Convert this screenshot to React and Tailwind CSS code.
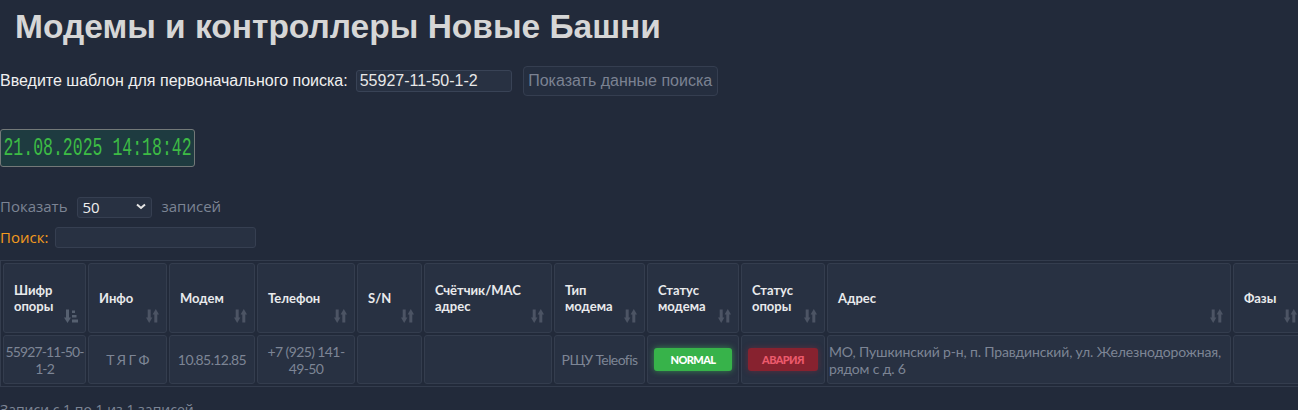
import { useState } from "react";

const columns = [
  { key: "shifr", title: ["Шифр", "опоры"], w: "w-[83px]", sorted: true },
  { key: "info", title: ["Инфо"], w: "w-[79px]" },
  { key: "modem", title: ["Модем"], w: "w-[86px]" },
  { key: "phone", title: ["Телефон"], w: "w-[98px]" },
  { key: "sn", title: ["S/N"], w: "w-[65px]" },
  { key: "meter", title: ["Счётчик/MAC", "адрес"], w: "w-[128px]" },
  { key: "type", title: ["Тип", "модема"], w: "w-[91px]" },
  { key: "mstatus", title: ["Статус", "модема"], w: "w-[92px]" },
  { key: "ostatus", title: ["Статус", "опоры"], w: "w-[84px]" },
  { key: "addr", title: ["Адрес"], w: "w-[404px]" },
  { key: "phases", title: ["Фазы"], w: "w-[72px]" },
];

const rows = [
  {
    id: 1,
    shifr: "55927-11-50-1-2",
    info: "Т Я Г Ф",
    modem: "10.85.12.85",
    phone: "+7 (925) 141-49-50",
    sn: "",
    meter: "",
    type: "РЩУ Teleofis",
    mstatus: "NORMAL",
    ostatus: "АВАРИЯ",
    addr: "МО, Пушкинский р-н, п. Правдинский, ул. Железнодорожная, рядом с д. 6",
    phases: "",
  },
];

function SortIcon({ sorted }) {
  if (sorted) {
    return (
      <svg width="14" height="14" viewBox="0 0 14 14" className="text-[#566070]">
        <line x1="3.5" y1="0.5" x2="3.5" y2="10" stroke="currentColor" strokeWidth="3" />
        <polygon points="0,8.5 7,8.5 3.5,14" fill="currentColor" />
        <rect x="8" y="1.5" width="3" height="2.5" fill="currentColor" />
        <rect x="8" y="6" width="4.5" height="2.5" fill="currentColor" />
        <rect x="8" y="10.5" width="6" height="3" fill="currentColor" />
      </svg>
    );
  }
  return (
    <svg width="13" height="14" viewBox="0 0 13 14" className="text-[#4c5464]">
      <line x1="3.2" y1="0.5" x2="3.2" y2="10" stroke="currentColor" strokeWidth="3" />
      <polygon points="0,8.5 6.4,8.5 3.2,14" fill="currentColor" />
      <line x1="9.8" y1="13.5" x2="9.8" y2="4" stroke="currentColor" strokeWidth="3" />
      <polygon points="6.6,5.5 13,5.5 9.8,0" fill="currentColor" />
    </svg>
  );
}

function StatusBadge({ value, kind }) {
  if (kind === "ok") {
    return (
      <span className="inline-block w-[78px] h-[23px] leading-[23px] rounded-[3px] bg-[#37b34a] text-white text-[11px] font-black text-center shadow-[0_0_6px_rgba(70,210,90,0.55)]">
        {value}
      </span>
    );
  }
  return (
    <span className="inline-block w-[70px] h-[23px] leading-[23px] rounded-[3px] bg-[#87222f] text-[#ec5a6c] text-[11px] font-black text-center shadow-[0_0_6px_rgba(200,40,60,0.35)]">
      {value}
    </span>
  );
}

function renderCell(col, row) {
  if (col.key === "mstatus") return <StatusBadge value={row.mstatus} kind="ok" />;
  if (col.key === "ostatus") return <StatusBadge value={row.ostatus} kind="bad" />;
  return row[col.key];
}

// ширина букв в ячейках подогнана под скриншот
function cellText(key) {
  if (key === "addr") return "text-left tracking-[-0.15px]";
  if (key === "shifr") return "text-center tracking-[-0.9px]";
  return "text-center tracking-[-0.6px]";
}

export default function App() {
  const [pattern, setPattern] = useState("55927-11-50-1-2");
  const [pageSize, setPageSize] = useState("50");
  const [search, setSearch] = useState("");

  return (
    <div className="min-h-screen w-full overflow-hidden bg-[#222a3a] text-white">
      <h1 className="pl-[15px] pt-[8px] h-[65px] text-[33.5px] font-bold text-[#d6d6d6] font-['Liberation_Sans',Arial,sans-serif] leading-[38px]">
        Модемы и контроллеры Новые Башни
      </h1>

      <div className="flex items-center h-[32px] font-['Liberation_Sans',Arial,sans-serif]">
        <label className="text-[16px] text-[#f0f0f0] mr-[8px]">Введите шаблон для первоначального поиска:</label>
        <input
          value={pattern}
          onChange={e => setPattern(e.target.value)}
          className="w-[156px] h-[22px] px-[3px] text-[16px] bg-[#283142] border border-[#394356] rounded-[3px] text-[#e8e8e8] outline-none"
        />
        <button className="ml-[11px] w-[195px] h-[30px] text-[16px] text-[#7b8292] bg-[#252e3f] border border-[#353e50] rounded-[4px]">
          Показать данные поиска
        </button>
      </div>

      <div className="h-[32px]" />

      <div className="w-[195px] h-[38px] flex items-center justify-center overflow-hidden bg-[#1e3b40] border border-[#737878] rounded-[3px]">
        <span className="inline-block scale-x-[0.66] text-[25px] leading-none text-[#3dbb45] font-['Liberation_Mono','DejaVu_Sans_Mono',monospace] whitespace-nowrap">
          21.08.2025 14:18:42
        </span>
      </div>

      <div className="h-[29px]" />

      <div className="flex items-center h-[21px] text-[15px] text-[#7c8494] font-['Open_Sans',sans-serif]">
        <span>Показать</span>
        <div className="relative ml-[9px] mr-[10px] w-[75px] h-[21px]">
          <select
            value={pageSize}
            onChange={e => setPageSize(e.target.value)}
            className="appearance-none w-full h-full pl-[5px] text-[15px] leading-[19px] text-[#eeeeee] bg-[#283142] border border-[#363f51] rounded-[3px] outline-none"
          >
            <option value="10">10</option>
            <option value="25">25</option>
            <option value="50">50</option>
            <option value="100">100</option>
          </select>
          <svg width="10" height="7" viewBox="0 0 10 7" className="absolute right-[6px] top-[7px] pointer-events-none">
            <polyline points="1,1.5 5,5 9,1.5" fill="none" stroke="#e6e6e6" strokeWidth="2" />
          </svg>
        </div>
        <span>записей</span>
      </div>

      <div className="flex items-center mt-[10px] h-[21px] font-['Open_Sans',sans-serif]">
        <span className="text-[15px] text-[#f39a1e] mr-[7px]">Поиск:</span>
        <input
          value={search}
          onChange={e => setSearch(e.target.value)}
          className="w-[201px] h-[21px] bg-[#283142] border border-[#363f51] rounded-[3px] outline-none text-[14px] px-1"
        />
      </div>

      <div className="h-[12px]" />

      <table className="table-fixed w-[1308px] border-separate border-spacing-[2px] border border-[#333c4d] font-['Lato','Open_Sans',sans-serif]">
        <thead>
          <tr>
            {columns.map(col => (
              <th
                key={col.key}
                className={`${col.w} relative h-[70px] pl-[10px] pr-[22px] text-left align-middle bg-[#283142] border border-[#343d4e] rounded-[3px] text-[13px] leading-[16px] font-bold text-[#e9eaec]`}
              >
                {col.title.map((t, i) => (
                  <div key={i}>{t}</div>
                ))}
                <span className="absolute right-[7px] bottom-[9px] flex">
                  <SortIcon sorted={col.sorted} />
                </span>
              </th>
            ))}
          </tr>
        </thead>
        <tbody>
          {rows.map(row => (
            <tr key={row.id}>
              {columns.map(col => (
                <td
                  key={col.key}
                  className={`h-[49px] px-[1px] align-middle bg-[#283142] border border-[#343d4e] rounded-[3px] text-[14px] leading-[17px] text-[#7d8595] ${cellText(col.key)}`}
                >
                  {renderCell(col, row)}
                </td>
              ))}
            </tr>
          ))}
        </tbody>
      </table>

      <div className="mt-[12px] text-[14px] text-[#7d8595] font-['Open_Sans',sans-serif]">
        Записи с 1 по 1 из 1 записей
      </div>
    </div>
  );
}
